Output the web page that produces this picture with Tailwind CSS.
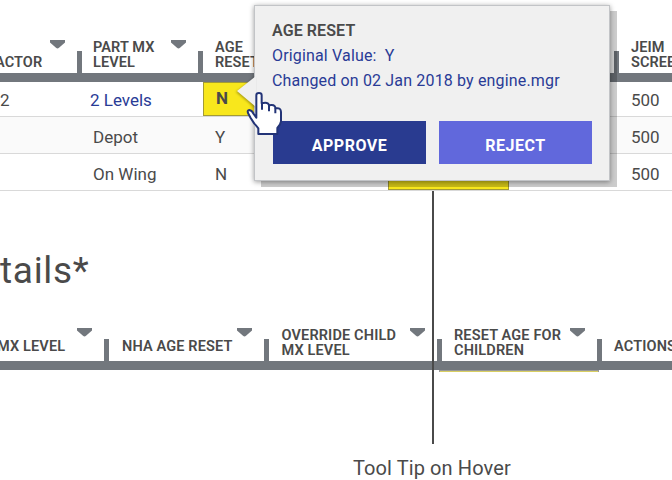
<!DOCTYPE html>
<html lang="en">
<head>
<meta charset="utf-8">
<title>Age reset approval</title>
<script src="https://cdn.jsdelivr.net/npm/@tailwindcss/browser@4"></script>
</head>
<body class="relative h-[480px] w-[672px] overflow-hidden bg-white font-['Roboto',sans-serif] text-[#4a4a4a] whitespace-nowrap">
<svg class="hidden"><symbol id="caret" viewBox="0 0 15 9"><path d="M0 0H15V2.5L9 7.8Q7.5 9 6 7.8L0 2.5Z" fill="#72777d"/></symbol></svg>

<main class="flex flex-col">
  <!-- Parts table -->
  <section class="pt-10">
    <div class="flex h-[42px] items-end border-b-[9px] border-[#72777d] text-[14.5px] leading-[15px] font-semibold tracking-[0.1px]">
      <div class="relative flex h-full w-[77px] shrink-0 items-end pb-[3px]"><span class="-ml-[5px]">ACTOR</span><svg class="absolute top-0 left-[50px] h-[9px] w-[15px]"><use href="#caret"/></svg></div>
      <div class="relative h-[22px] w-[121px] shrink-0 border-l-[5px] border-[#72777d]"><div class="-mt-[11px] pl-[11px]">PART MX<br>LEVEL</div><svg class="absolute -top-[11px] left-[89px] h-[9px] w-[15px]"><use href="#caret"/></svg></div>
      <div class="h-[22px] w-[416px] shrink-0 border-l-[5px] border-[#72777d]"><div class="-mt-[11px] pl-[12px]">AGE<br>RESET</div></div>
      <div class="h-[22px] w-[58px] shrink-0 border-l-[5px] border-[#72777d]"><div class="-mt-[11px] pl-[12px]">JEIM<br>SCREE</div></div>
    </div>
    <div class="text-[17px] leading-[37px]">
      <div class="flex h-[35px] border-b border-[#d9d9d9]"><span class="w-[90px]">2</span><span class="w-[113px] text-[#293b96]">2 Levels</span><span class="h-[34px] w-[122px] border border-[#a39b35] bg-[#f8e71c] pl-3 leading-[30px] font-bold">N</span><span class="pl-[306px]">500</span></div>
      <div class="flex h-[37px] border-b border-[#d9d9d9] bg-[#fafafa]"><span class="w-[215px] pl-[93px] leading-[41px]">Depot</span><span class="w-[416px] leading-[41px]">Y</span><span class="leading-[41px]">500</span></div>
      <div class="flex h-[37px] border-b border-[#d9d9d9] leading-[41px]"><span class="w-[215px] pl-[93px]">On Wing</span><span class="w-[173px]">N</span><span class="h-[36px] w-[121px] border border-[#a39b35] bg-[#f8e71c]"></span><span class="pl-[122px]">500</span></div>
    </div>
  </section>

  <h1 class="mt-[56px] h-[48px] text-[37px] leading-[48px] font-normal tracking-[0.7px]">tails*</h1>

  <!-- Details table -->
  <section class="mt-[33px]">
    <div class="flex h-[42px] items-end border-b-[9px] border-[#72777d] text-[14.5px] leading-[15px] font-semibold tracking-[0.15px]">
      <div class="relative h-[22px] w-[104px] shrink-0"><div class="-ml-[3px]">MX LEVEL</div><svg class="absolute -top-[11px] left-[77px] h-[9px] w-[15px]"><use href="#caret"/></svg></div>
      <div class="relative h-[22px] w-[160px] shrink-0 border-l-[5px] border-[#72777d] pl-[13px]">NHA AGE RESET<svg class="absolute -top-[11px] left-[128px] h-[9px] w-[15px]"><use href="#caret"/></svg></div>
      <div class="relative h-[22px] w-[173px] shrink-0 border-l-[5px] border-[#72777d] pl-[12.5px]"><div class="-mt-[11px]">OVERRIDE CHILD<br>MX LEVEL</div><svg class="absolute -top-[11px] left-[141px] h-[9px] w-[15px]"><use href="#caret"/></svg></div>
      <div class="relative h-[22px] w-[160px] shrink-0 border-l-[5px] border-[#72777d] pl-[12px]"><div class="-mt-[11px]">RESET AGE FOR<br>CHILDREN</div><svg class="absolute -top-[11px] left-[128px] h-[9px] w-[15px]"><use href="#caret"/></svg></div>
      <div class="h-[22px] w-[75px] shrink-0 border-l-[5px] border-[#72777d] pl-[12px]">ACTIONS</div>
    </div>
    <div class="ml-[439px] h-[2px] w-[160px] border-x border-t border-[#9a9a98] bg-[#d9cf62]"></div>
  </section>
  <p class="mt-[82px] pl-[353px] text-[20px] leading-[28px] tracking-[0.1px]">Tool Tip on Hover</p>
</main>

<!-- Callout leader -->
<div class="absolute top-[191px] left-[432px] h-[253px] w-[2px] bg-[#4a4a4a]"></div>

<!-- Tooltip -->
<aside class="absolute top-[5px] left-[254px] h-[176px] w-[356px] border border-[#c2c4c7] bg-[#f0f0f0] pt-[15px] pl-[18px] shadow-[0_1px_5px_rgba(0,0,0,0.4),7px_6px_0_rgba(0,0,0,0.2)]">
  <svg class="absolute top-[69px] -left-[19px] h-[34px] w-[20px] overflow-visible drop-shadow-[-1px_1px_1px_rgba(0,0,0,0.3)]" viewBox="0 0 20 34"><path d="M20 1L1 16L20 32Z" fill="#f0f0f0"/></svg>
  <h2 class="-ml-px text-[16px] leading-[20px] font-semibold tracking-[0.1px]">AGE RESET</h2>
  <p class="-ml-px mt-[3px] text-[16px] leading-[24.5px] tracking-[0.16px] text-[#293b96]">Original Value:&nbsp; Y<br>Changed on 02 Jan 2018 by engine.mgr</p>
  <div class="mt-[28px] flex gap-[13px] text-[16px] font-bold tracking-[0.5px] text-white">
    <button class="h-[43px] w-[153px] bg-[#293b90] pt-[6px]">APPROVE</button>
    <button class="h-[43px] w-[153px] bg-[#6168dc] pt-[6px]">REJECT</button>
  </div>
</aside>

<!-- Pointer -->
<svg class="absolute top-[88px] left-[240px] h-[50px] w-[45px]" viewBox="30 60 135 150"><path d="M79 149V82Q79 75 87 75Q95 75 95 82V106Q115 101 117 112Q134 107 137 121Q153 118 153 132V160Q152 169 142 180V198H85V181Q80 174 73 167L62 150L54 135Q51 127 58 126Q66 127 71 138L79 149Z" fill="#fff" stroke="#233477" stroke-width="6" stroke-linejoin="round"/><path d="M96 104V125M117 110V130M136 119V136" fill="none" stroke="#233477" stroke-width="6"/></svg>
</body>
</html>
